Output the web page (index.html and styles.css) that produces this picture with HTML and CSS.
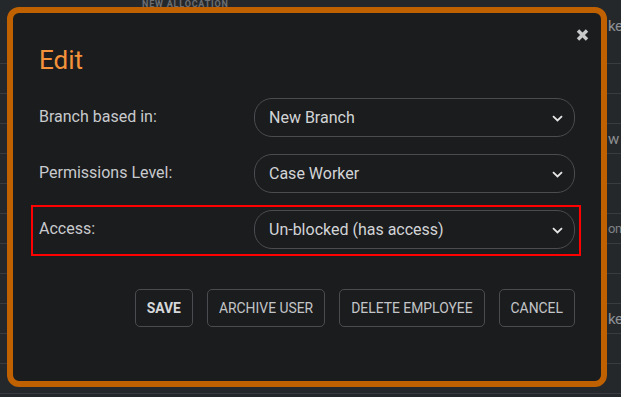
FILE: index.html
```html
<!DOCTYPE html>
<html lang="en">
<head>
<meta charset="utf-8">
<title>Edit</title>
<link rel="stylesheet" href="styles.css">
</head>
<body>
  <div class="page">
    <div class="bg-head"><span class="bg-caption">NEW ALLOCATION</span><span class="bg-tail">ke</span></div>
    <div class="bg-row"></div>
    <div class="bg-row"></div>
    <div class="bg-row"><span class="bg-tail">w</span></div>
    <div class="bg-row"></div>
    <div class="bg-row"></div>
    <div class="bg-row"><span class="bg-tail bg-bold">on</span></div>
    <div class="bg-row"></div>
    <div class="bg-row"></div>
    <div class="bg-row"><span class="bg-tail">ke</span></div>
    <div class="bg-row"></div>
    <div class="bg-row"></div>
  </div>

  <div class="modal">
    <button class="close" type="button" aria-label="Close">
      <svg width="13" height="12" viewBox="0 0 13 12"><path d="M2 1.5 L11 10.5 M11 1.5 L2 10.5" stroke="#c9c9c9" stroke-width="3.4" fill="none"/></svg>
    </button>
    <h2 class="title">Edit</h2>
    <div class="form">
      <div class="row">
        <label class="label">Branch based in:</label>
        <div class="select"><span>New Branch</span>
          <svg class="chev" width="11" height="7" viewBox="0 0 11 7"><path d="M1 1.2 L5.5 5.5 L10 1.2" stroke="#e6e6e6" stroke-width="1.8" fill="none"/></svg>
        </div>
      </div>
      <div class="row">
        <label class="label">Permissions Level:</label>
        <div class="select"><span>Case Worker</span>
          <svg class="chev" width="11" height="7" viewBox="0 0 11 7"><path d="M1 1.2 L5.5 5.5 L10 1.2" stroke="#e6e6e6" stroke-width="1.8" fill="none"/></svg>
        </div>
      </div>
      <div class="row row-marked">
        <label class="label">Access:</label>
        <div class="select"><span>Un-blocked (has access)</span>
          <svg class="chev" width="11" height="7" viewBox="0 0 11 7"><path d="M1 1.2 L5.5 5.5 L10 1.2" stroke="#e6e6e6" stroke-width="1.8" fill="none"/></svg>
        </div>
      </div>
    </div>
    <div class="actions">
      <button class="btn btn-bold" type="button">Save</button>
      <button class="btn" type="button">Archive User</button>
      <button class="btn" type="button">Delete Employee</button>
      <button class="btn" type="button">Cancel</button>
    </div>
  </div>
</body>
</html>
```

FILE: styles.css
```css
* { box-sizing: border-box; }

html, body {
  margin: 0;
  padding: 0;
  width: 621px;
  height: 397px;
  overflow: hidden;
  background: #25282b;
  font-family: Roboto, "Noto Sans", sans-serif;
}

.page {
  display: flex;
  flex-direction: column;
}

.bg-head {
  height: 64px;
  border-bottom: 1px solid #383b3f;
  display: grid;
  grid-template-columns: 608px 1fr;
  align-items: start;
}

.bg-caption {
  padding-left: 142px;
  margin-top: 0;
  font-size: 9px;
  line-height: 8px;
  font-weight: 700;
  color: #6b6e72;
  letter-spacing: 0.8px;
  white-space: nowrap;
}

.bg-row {
  height: 30px;
  border-bottom: 1px solid #383b3f;
  display: flex;
  align-items: center;
}

.bg-tail {
  margin-left: 608px;
  font-size: 15px;
  color: #8d9094;
  white-space: nowrap;
  letter-spacing: -0.5px;
}

.bg-head .bg-tail {
  margin-left: 0;
  margin-top: 17px;
}

.bg-bold { font-size: 13px; color: #7f8286; }

.modal {
  position: absolute;
  left: 7px;
  top: 7px;
  width: 600px;
  height: 380px;
  border: 6px solid #bf6100;
  border-radius: 12px;
  background: #1b1c1e;
  padding: 32px 26px 0 26px;
}

.close {
  position: absolute;
  top: 16px;
  right: 12px;
  width: 13px;
  height: 12px;
  padding: 0;
  border: 0;
  background: none;
  display: block;
}
.close svg { display: block; }

.title {
  margin: 0 0 23px;
  font-size: 26px;
  line-height: 30px;
  font-weight: 400;
  color: #f3923a;
}

.form {
  display: flex;
  flex-direction: column;
  gap: 17px;
}

.row {
  display: flex;
  align-items: center;
}

.row-marked {
  margin: -5px -6px -7px -8px;
  border: 2px solid #ff0000;
  padding: 3px 4px 5px 6px;
}

.label {
  width: 215px;
  font-size: 16px;
  color: #c8cacd;
  padding-bottom: 2px;
}

.select {
  width: 321px;
  height: 39px;
  border: 1px solid #4a4c50;
  border-radius: 18px;
  padding: 0 11px 0 14px;
  display: flex;
  align-items: center;
  justify-content: space-between;
  font-size: 16px;
  color: #d2d4d6;
}

.chev { display: block; margin-top: 1px; }

.actions {
  margin-top: 40px;
  display: flex;
  justify-content: flex-end;
  gap: 14px;
}

.btn {
  height: 38px;
  padding: 0 11px;
  border: 1px solid #4a4c50;
  border-radius: 5px;
  background: transparent;
  font-family: Roboto, "Noto Sans", sans-serif;
  font-size: 13.9px;
  text-transform: uppercase;
  color: #c3c5c8;
}

.btn-bold {
  font-weight: 700;
  color: #d6d8da;
}
```
